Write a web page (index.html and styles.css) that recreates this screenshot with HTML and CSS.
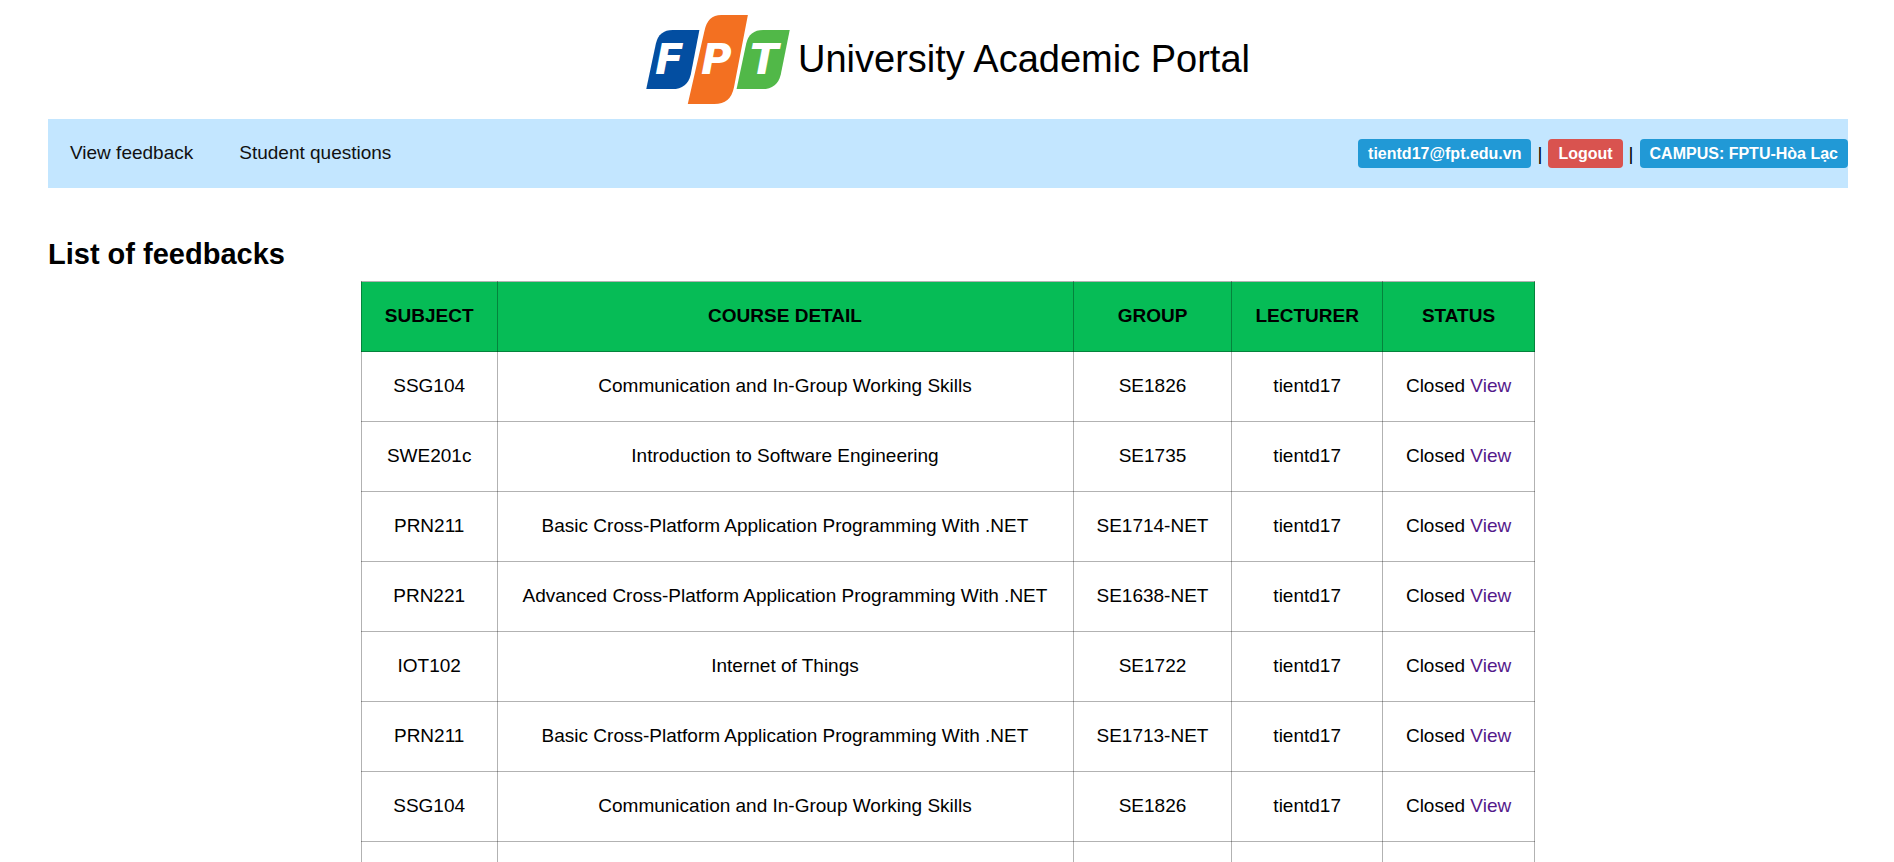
FILE: index.html
```html
<!DOCTYPE html>
<html lang="en">
<head>
<meta charset="utf-8">
<title>University Academic Portal</title>
<link rel="stylesheet" href="styles.css">
</head>
<body>
<div class="page">
  <header class="brand">
    <svg class="logo" viewBox="42 44 432 268" role="img" aria-label="FPT">
      <path fill="#034ea1" d="M122 89H202L176 223Q166 267 120 267H42L71 130Q80 89 122 89Z"/>
      <path fill="#f37021" d="M268 44H348L306 262Q296 312 247 312H167L217 93Q226 44 268 44Z"/>
      <path fill="#51b848" d="M394 89H474L447 223Q437 267 391 267H314L343 130Q352 89 394 89Z"/>
      <g class="logo-text">
        <text x="68" y="222">F</text>
        <text x="207" y="222">P</text>
        <text x="354" y="222">T</text>
      </g>
    </svg>
    <span class="brand-name">University Academic Portal</span>
  </header>
  <nav class="navbar">
    <div class="nav-links">
      <a class="nav-link" href="#feedback">View feedback</a>
      <a class="nav-link" href="#questions">Student questions</a>
    </div>
    <div class="account">
      <a class="badge" href="#account">tientd17@fpt.edu.vn</a>
      <span>|</span>
      <a class="badge badge-danger" href="#logout">Logout</a>
      <span>|</span>
      <span class="badge">CAMPUS: FPTU-Hòa Lạc</span>
    </div>
  </nav>
  <main>
    <h1 class="title">List of feedbacks</h1>
    <table class="feedbacks">
      <thead>
        <tr><th>SUBJECT</th><th class="course">COURSE DETAIL</th><th>GROUP</th><th>LECTURER</th><th>STATUS</th></tr>
      </thead>
      <tbody>
        <tr><td>SSG104</td><td>Communication and In-Group Working Skills</td><td>SE1826</td><td>tientd17</td><td>Closed <a class="view" href="#1">View</a></td></tr>
        <tr><td>SWE201c</td><td>Introduction to Software Engineering</td><td>SE1735</td><td>tientd17</td><td>Closed <a class="view" href="#2">View</a></td></tr>
        <tr><td>PRN211</td><td>Basic Cross-Platform Application Programming With .NET</td><td>SE1714-NET</td><td>tientd17</td><td>Closed <a class="view" href="#3">View</a></td></tr>
        <tr><td>PRN221</td><td>Advanced Cross-Platform Application Programming With .NET</td><td>SE1638-NET</td><td>tientd17</td><td>Closed <a class="view" href="#4">View</a></td></tr>
        <tr><td>IOT102</td><td>Internet of Things</td><td>SE1722</td><td>tientd17</td><td>Closed <a class="view" href="#5">View</a></td></tr>
        <tr><td>PRN211</td><td>Basic Cross-Platform Application Programming With .NET</td><td>SE1713-NET</td><td>tientd17</td><td>Closed <a class="view" href="#6">View</a></td></tr>
        <tr><td>SSG104</td><td>Communication and In-Group Working Skills</td><td>SE1826</td><td>tientd17</td><td>Closed <a class="view" href="#7">View</a></td></tr>
        <tr><td></td><td></td><td></td><td></td><td></td></tr>
      </tbody>
    </table>
  </main>
</div>
</body>
</html>
```
FILE: styles.css
```css
html {
  height: 100%;
  overflow: hidden;
}

body {
  height: 100%;
  margin: 0;
  overflow: hidden;
  background: #fff;
  color: #000;
  font: 19px/23px "Liberation Sans", Arial, sans-serif;
}

.page {
  padding: 15px 46px 0 48px;
}

.brand {
  display: flex;
  align-items: center;
  justify-content: center;
  gap: 8px;
  margin-bottom: 15px;
}

.logo {
  width: 144px;
  height: 89px;
}

.logo-text {
  fill: #fff;
  font: italic bold 126px "DejaVu Sans", sans-serif;
}

.brand-name {
  padding-bottom: 2px;
  font-size: 38px;
  line-height: 44px;
}

.navbar {
  display: flex;
  align-items: center;
  justify-content: space-between;
  background: #c3e6ff;
}

.nav-links {
  display: flex;
  gap: 2px;
}

.nav-link {
  padding: 22px 22px 24px;
  color: #111;
  text-decoration: none;
}

.account {
  display: flex;
  align-items: center;
  gap: 6px;
}

.badge {
  padding: 3px 10px;
  border-radius: 4px;
  background: #2199d6;
  color: #fff;
  font-size: 16px;
  font-weight: bold;
  text-decoration: none;
}

.badge-danger {
  background: #d9534f;
}

.title {
  margin: 48px 0 9px;
  font-size: 29px;
  line-height: 36px;
}

.feedbacks {
  margin: 0 auto;
  border-collapse: collapse;
  text-align: center;
}

.feedbacks th,
.feedbacks td {
  height: 23px;
  padding: 22px 23px 24px;
  border: 1px solid rgba(0, 0, 0, 0.3);
}

.feedbacks th {
  background: #06bc56;
}

.feedbacks .course {
  min-width: 529px;
}

.view {
  color: #551a8b;
  text-decoration: none;
}
```
